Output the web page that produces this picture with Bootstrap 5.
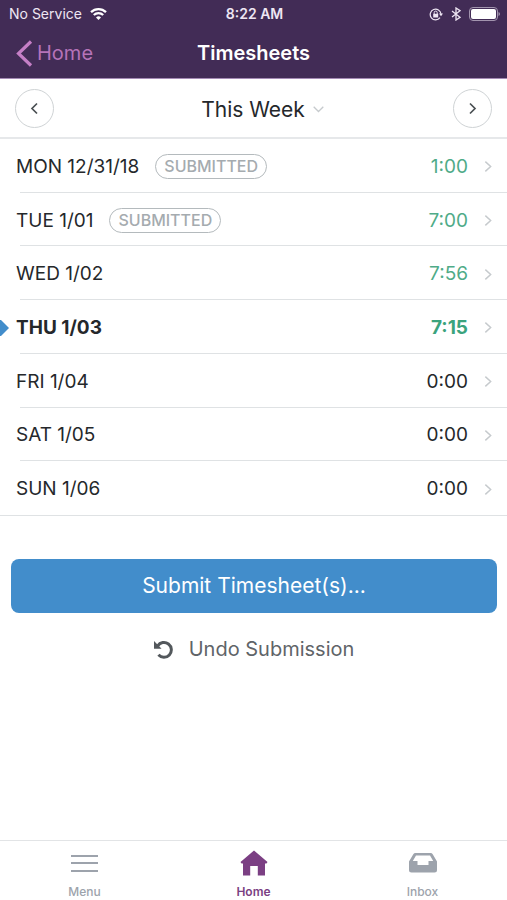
<!DOCTYPE html>
<html lang="en">
<head>
<meta charset="utf-8">
<meta name="viewport" content="width=device-width, initial-scale=1">
<title>Timesheets</title>
<link href="https://cdn.jsdelivr.net/npm/bootstrap@5.3.0/dist/css/bootstrap.min.css" rel="stylesheet">
<style>
  body { font-family: Inter, "Liberation Sans", sans-serif; color: #25282b; font-size: 19px; line-height: 24px; background: #fff; }
  svg { display: block; flex: none; }
  .btn { line-height: 24px; }
  .app-top { background: #422c56; border-bottom: 1px solid #a48bb4; }
  .status { height: 28px; font-size: 14px; line-height: 16px; color: #eee6f3; padding: 0 7px 0 9px; }
  .title-row { height: 50px; }
  .title-row h1 { font-size: 20px; line-height: 24px; }
  .back { color: #b673b9; font-size: 20px; }
  .period { height: 60px; border-bottom: 2px solid #e6e8ea; padding: 0 15px; }
  .period-name { font-size: 21px; color: #25282b; padding: 3px 0 0 18px; }
  .round { width: 39px; height: 39px; border: 1px solid #cfd3d5; color: #4a5053; }
  .days { min-height: 377px; grid-auto-rows: 1fr; border-bottom: 1px solid #dfe2e4; }
  .day { padding: 2px 15px 0 16px; color: inherit; }
  .day::after { content: ""; position: absolute; left: 20px; right: 0; bottom: 0; border-bottom: 1px solid #dfe2e4; }
  .day:last-child::after { display: none; }
  .today-mark { position: absolute; left: 0; }
  .tag { font-size: 16px; line-height: 18px; padding: 2px 8px 3px; border: 1px solid #b4babd; color: #a5abaf; border-radius: 13px; }
  .logged { color: #4fab88; }
  .current .logged { color: #3ba37d; }
  .actions { padding: 43px 10px 0 11px; }
  .submit { background: #428dcb; color: #fff; height: 54px; font-size: 21px; border-radius: 8px; }
  .submit:hover { background: #367db8; color: #fff; }
  .undo { color: #5f6468; font-size: 20px; }
  .tabs { height: 60px; border-top: 1px solid #e2e4e6; font-size: 12px; line-height: 16px; }
  .tab { color: #9da3ac; }
  .tab.active { color: #7b3f83; }
</style>
<script src="https://cdn.jsdelivr.net/npm/bootstrap@5.3.0/dist/js/bootstrap.bundle.min.js"></script>
</head>
<body>
<svg width="0" height="0" class="position-absolute" aria-hidden="true">
  <symbol id="next" viewBox="0 0 9 13"><path d="M1.5 1 7.5 6.5 1.5 12" fill="none" stroke="#c6cacd" stroke-width="1.6"/></symbol>
</svg>
<div class="d-flex flex-column min-vh-100">
  <header class="app-top">
    <div class="status row g-0 align-items-center">
      <div class="col d-flex align-items-center gap-2">
        <span>No Service</span>
        <svg width="17" height="12" viewBox="0 0 17 12" fill="none" stroke="#fff" stroke-width="2.300" aria-label="Wi-Fi"><path d="M1 4.2a10.8 10.8 0 0 1 15 0M3.8 7a6.8 6.8 0 0 1 9.4 0"/><path d="M8.500 12 6 9.400a3.600 3.600 0 0 1 5 0z" fill="#fff" stroke="none"/></svg>
      </div>
      <div class="col-auto fw-semibold">8:22 AM</div>
      <div class="col d-flex align-items-center justify-content-end gap-2">
        <svg width="14" height="13" viewBox="0 0 14 13" fill="none" stroke="#eee6f3" aria-label="Rotation locked"><path d="M11 9.700A5.400 5.400 0 1 1 12 6" stroke-width="1.200"/><path d="M10 5.500h4l-2 2.700z" fill="#eee6f3" stroke="none"/><path d="M4.200 5.800h5v3.700h-5z" fill="#eee6f3" stroke="none"/><path d="M5.200 6V4.600a1.500 1.500 0 0 1 3 0V6"/></svg>
        <svg width="10" height="14" viewBox="0 0 10 14" fill="none" stroke="#eee6f3" stroke-width="1.300" aria-label="Bluetooth"><path d="M1 4l8 6.300L5 13V1l4 2.700L1 10"/></svg>
        <svg width="31" height="14" viewBox="0 0 31 14" aria-label="Battery full"><rect x=".5" y=".5" width="28" height="13" rx="3.500" fill="none" stroke="#a294ae"/><rect x="2" y="2" width="25" height="10" rx="2" fill="#fff"/><path d="M29.500 5v4q1.500-.5 1.500-2t-1.500-2z" fill="#a294ae"/></svg>
      </div>
    </div>
    <nav class="title-row row g-0 align-items-center px-3">
      <div class="col d-flex"><a href="#" class="back d-flex align-items-center gap-1 text-decoration-none"><svg width="17" height="27" viewBox="0 0 17 27" fill="none" stroke="#c57fc6" stroke-width="3.200"><path d="M15 1.500 2.500 13.500 15 25.500"/></svg>Home</a></div>
      <h1 class="col-auto m-0 fw-semibold text-white">Timesheets</h1>
      <div class="col"></div>
    </nav>
  </header>

  <div class="period d-flex align-items-center justify-content-between">
    <button type="button" class="round btn p-0 rounded-circle d-flex align-items-center justify-content-center" aria-label="Previous week"><svg width="9" height="13" viewBox="0 0 9 13" fill="none" stroke="currentColor" stroke-width="1.700"><path d="M7 1.500 2 6.500l5 5"/></svg></button>
    <button type="button" class="period-name btn border-0 d-flex align-items-center gap-2">This Week <svg width="11" height="7" viewBox="0 0 11 7" fill="none" stroke="#c6cacd" stroke-width="1.300"><path d="M.7.7 5.500 5.500 10.300.7"/></svg></button>
    <button type="button" class="round btn p-0 rounded-circle d-flex align-items-center justify-content-center" aria-label="Next week"><svg width="9" height="13" viewBox="0 0 9 13" fill="none" stroke="currentColor" stroke-width="1.700"><path d="M2 1.500l5 5-5 5"/></svg></button>
  </div>

  <main class="flex-grow-1">
    <div class="days d-grid">
      <a href="#" class="day position-relative d-flex align-items-center text-decoration-none"><span>MON 12/31/18</span><span class="tag ms-3 fw-medium">SUBMITTED</span><span class="logged ms-auto me-3">1:00</span><svg width="8" height="13"><use href="#next"/></svg></a>
      <a href="#" class="day position-relative d-flex align-items-center text-decoration-none"><span>TUE 1/01</span><span class="tag ms-3 fw-medium">SUBMITTED</span><span class="logged ms-auto me-3">7:00</span><svg width="8" height="13"><use href="#next"/></svg></a>
      <a href="#" class="day position-relative d-flex align-items-center text-decoration-none"><span>WED 1/02</span><span class="logged ms-auto me-3">7:56</span><svg width="8" height="13"><use href="#next"/></svg></a>
      <a href="#" class="day current position-relative d-flex align-items-center text-decoration-none fw-bold" aria-current="date"><svg class="today-mark" width="9" height="18" viewBox="0 0 9 18"><path d="M0 1h1l8 8-8 8H0z" fill="#428dcb"/></svg><span>THU 1/03</span><span class="logged ms-auto me-3">7:15</span><svg width="8" height="13"><use href="#next"/></svg></a>
      <a href="#" class="day position-relative d-flex align-items-center text-decoration-none"><span>FRI 1/04</span><span class="ms-auto me-3">0:00</span><svg width="8" height="13"><use href="#next"/></svg></a>
      <a href="#" class="day position-relative d-flex align-items-center text-decoration-none"><span>SAT 1/05</span><span class="ms-auto me-3">0:00</span><svg width="8" height="13"><use href="#next"/></svg></a>
      <a href="#" class="day position-relative d-flex align-items-center text-decoration-none"><span>SUN 1/06</span><span class="ms-auto me-3">0:00</span><svg width="8" height="13"><use href="#next"/></svg></a>
    </div>
    <div class="actions d-flex flex-column align-items-center gap-4">
      <button type="button" class="submit btn w-100 border-0 p-0">Submit Timesheet(s)...</button>
      <button type="button" class="undo btn border-0 p-0 d-flex align-items-center gap-3"><svg width="19" height="19" viewBox="0 0 18 18"><path d="M3.500 5.600A7 7 0 1 1 4.200 14" fill="none" stroke="#53585c" stroke-width="2.800"/><path d="M0 1v7.200h7.200z" fill="#53585c"/></svg>Undo Submission</button>
    </div>
  </main>

  <nav class="tabs row g-0 text-center sticky-bottom bg-white">
    <a href="#" class="tab col d-flex flex-column align-items-center justify-content-end gap-2 text-decoration-none fw-medium"><svg width="27" height="26" viewBox="0 0 27 26" stroke="currentColor" stroke-width="2"><path d="M0 6h27M0 13h27M0 21h27"/></svg>Menu</a>
    <a href="#" class="tab active col d-flex flex-column align-items-center justify-content-end gap-2 text-decoration-none fw-semibold" aria-current="page"><svg width="28" height="26" viewBox="0 0 28 26" fill="currentColor"><path d="M14 .5 27.500 12 26.500 13.500H25V25.500h-7.200V16h-7.600v9.500H3v-12H1.500L.5 12z"/></svg>Home</a>
    <a href="#" class="tab col d-flex flex-column align-items-center justify-content-end gap-2 text-decoration-none fw-medium"><svg width="28" height="26" viewBox="0 0 28 26"><path d="M6.500 3h15q1.500 0 2.200 1.300L28 11.500V20q0 2.500-2.500 2.500h-23Q0 22.500 0 20v-8.500l4.300-7.200Q5 3 6.500 3zM7 5.500 3.800 11h4.700v4h11v-4h4.700L21 5.500z" fill="currentColor" fill-rule="evenodd"/></svg>Inbox</a>
  </nav>
</div>
</body>
</html>
